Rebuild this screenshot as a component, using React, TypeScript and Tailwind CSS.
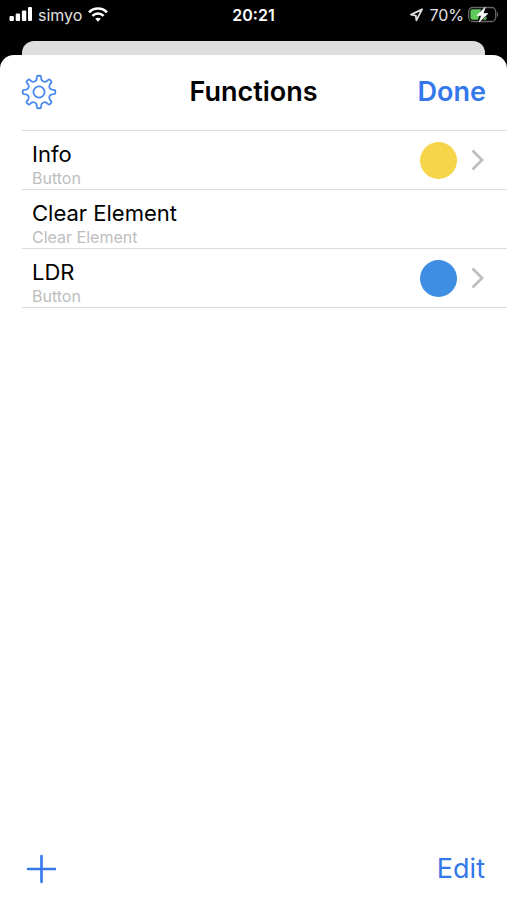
import React from 'react';

interface FunctionItem {
  name: string;
  kind: string;
  color?: string;
}

const items: FunctionItem[] = [
  { name: 'Info', kind: 'Button', color: 'bg-[#f6d54a]' },
  { name: 'Clear Element', kind: 'Clear Element' },
  { name: 'LDR', kind: 'Button', color: 'bg-[#3e8fe3]' },
];

// Outline of an eight-toothed gear around the origin
const gearPath = () => {
  const point = (r: number, deg: number) => {
    const a = (deg * Math.PI) / 180;
    return `${(r * Math.sin(a)).toFixed(2)} ${(-r * Math.cos(a)).toFixed(2)}`;
  };
  let d = '';
  for (let i = 0; i < 8; i++) {
    const c = i * 45;
    d += `${i === 0 ? 'M' : 'L'}${point(15.2, c - 8)}`;
    d += `Q${point(16.3, c - 7)} ${point(16.3, c - 4)}`;
    d += `L${point(16.3, c + 4)}`;
    d += `Q${point(16.3, c + 7)} ${point(15.2, c + 8)}`;
    d += `L${point(13.2, c + 10)}`;
    d += `C${point(11, c + 14)} ${point(11, c + 31)} ${point(13.2, c + 35)}`;
  }
  return d + 'Z';
};

const GearIcon: React.FC = () => (
  <svg viewBox="-18 -18 36 36" className="w-9 h-9" fill="none" stroke="#4a8af0" strokeWidth="1.8" strokeLinejoin="round">
    <path d={gearPath()} />
    <circle r="5.6" />
  </svg>
);

const StatusBar: React.FC = () => (
  <div className="h-[41px] px-2 pb-3 grid grid-cols-[1fr_auto_1fr] items-center text-white">
    <div className="flex items-center">
      <svg viewBox="0 0 24 16" className="w-6 h-4 mr-1.5" fill="#fff" aria-label="Signal">
        <rect x="1.5" y="9" width="4.4" height="5" rx="1" />
        <rect x="7.7" y="6.5" width="4.4" height="7.5" rx="1" />
        <rect x="13.9" y="3.5" width="4.4" height="10.5" rx="1" />
        <rect x="20" y="0" width="4" height="14" rx="1" />
      </svg>
      <span className="text-[16px] leading-5 text-[#e2e2e2]">simyo</span>
      <svg viewBox="0 0 20 16" className="w-5 h-4 ml-1.5" fill="none" stroke="#fff" strokeWidth="2.6" aria-label="Wi-Fi">
        <path d="M1 5.3C6 .3 14 .3 19 5.3" />
        <path d="M4.4 8.9c3.2-3.2 8-3.2 11.2 0" />
        <path d="M10 14.7l-2.8-2.9c1.6-1.5 4-1.5 5.6 0z" fill="#fff" stroke="none" />
      </svg>
    </div>
    <span className="text-[16px] leading-5 font-semibold">20:21</span>
    <div className="flex items-center justify-end">
      <svg viewBox="0 0 14 14" className="w-3.5 h-3.5 mr-1.5" fill="none" stroke="#dcdcdc" strokeWidth="1.8" strokeLinejoin="round" aria-label="Location">
        <path d="M13 1.4L2 6.6l4.8 1 .6 4.8z" />
      </svg>
      <span className="text-[16px] leading-5 text-[#e2e2e2]">70%</span>
      <svg viewBox="0 0 31 18" className="w-[31px] h-[18px] ml-1" aria-label="Battery">
        <rect x=".7" y="1.5" width="27" height="14" rx="4" fill="none" stroke="#666" strokeWidth="1.3" />
        <path d="M4.8 3.2h8.2L10 13.8H4.8a2.4 2.4 0 0 1-2.4-2.4V5.6a2.4 2.4 0 0 1 2.4-2.4z" fill="#5fc95c" />
        <path d="M14.5 13.8l4-3.6v2.2q0 1.4-1.4 1.4z" fill="#5fc95c" />
        <path d="M29 6c1.6.6 1.6 4.4 0 5z" fill="#666" />
        <path d="M17.2 1.2L8.8 9.6h4.6l-2.2 6.4 8.8-8.6h-4.8z" fill="#fff" stroke="#fff" strokeWidth=".6" strokeLinejoin="round" />
      </svg>
    </div>
  </div>
);

const App: React.FC = () => {
  return (
    <div className="min-h-screen bg-black flex flex-col font-['Inter','Liberation_Sans',sans-serif]">
      <StatusBar />

      {/* Edge of the screen behind the sheet */}
      <div className="mx-[22px] h-3.5 rounded-t-[12px] bg-[#dedede]" />

      <main className="flex-1 flex flex-col bg-white rounded-t-[14px]">
        <header className="h-[75px] pb-0.5 px-[21px] grid grid-cols-[1fr_auto_1fr] items-center">
          <button type="button" aria-label="Settings" className="justify-self-start">
            <GearIcon />
          </button>
          <h1 className="text-[27px] leading-8 font-semibold text-black">Functions</h1>
          <button type="button" className="justify-self-end text-[27px] leading-8 font-semibold text-[#3478ec]">
            Done
          </button>
        </header>

        <ul className="ml-[22px] border-t border-[#dcdcdc]">
          {items.map((item) => (
            <li key={item.name} className="h-[59px] pl-2.5 pr-[23px] flex items-center justify-between border-b border-[#dcdcdc]">
              <div className="pt-2">
                <p className="text-[22px] leading-7 text-black">{item.name}</p>
                <p className="text-[16px] leading-5 text-[#bdbdbd]">{item.kind}</p>
              </div>
              {item.color && (
                <button type="button" aria-label={`Open ${item.name}`} className="flex items-center gap-3.5">
                  <span className={`w-[37px] h-[37px] rounded-full ${item.color}`} />
                  <svg viewBox="0 0 13 22" className="w-[13px] h-[22px]" fill="none" stroke="#bebebe" strokeWidth="2.8">
                    <path d="M1.5 1.5L11 11l-9.5 9.5" />
                  </svg>
                </button>
              )}
            </li>
          ))}
        </ul>

        <footer className="mt-auto h-[63px] px-[22px] flex items-center justify-between text-[#3478ec]">
          <button type="button" aria-label="Add function" className="pl-1">
            <svg viewBox="0 0 30 30" className="w-[30px] h-[30px]" fill="none" stroke="currentColor" strokeWidth="2.6" strokeLinecap="round">
              <path d="M15.5 2v26M2 15h27" />
            </svg>
          </button>
          <button type="button" className="text-[27px] leading-8">
            Edit
          </button>
        </footer>
      </main>
    </div>
  );
};

export default App;
